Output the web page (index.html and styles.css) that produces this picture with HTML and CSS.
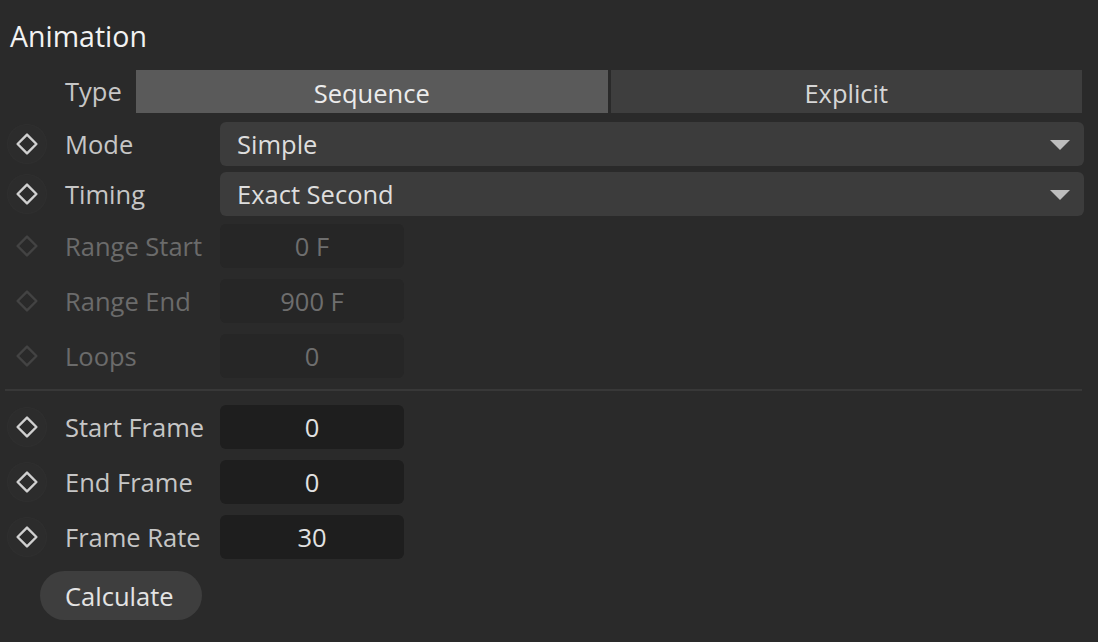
FILE: index.html
```html
<!DOCTYPE html>
<html>
<head>
<meta charset="utf-8">
<link rel="stylesheet" href="styles.css">
</head>
<body>
<div class="panel">
  <div class="title">Animation</div>

  <div class="row row-type">
    <div class="icon-slot"></div>
    <div class="label label-type">Type</div>
    <div class="segmented">
      <div class="seg seg-active">Sequence</div>
      <div class="seg">Explicit</div>
    </div>
  </div>

  <div class="row row-mode">
    <div class="icon-slot"><span class="key"><svg viewBox="0 0 24 24" width="24" height="24"><path d="M12 2.6 L21.4 12 L12 21.4 L2.6 12 Z"/></svg></span></div>
    <div class="label">Mode</div>
    <div class="dropdown"><span>Simple</span><span class="arrow"></span></div>
  </div>

  <div class="row row-timing">
    <div class="icon-slot"><span class="key"><svg viewBox="0 0 24 24" width="24" height="24"><path d="M12 2.6 L21.4 12 L12 21.4 L2.6 12 Z"/></svg></span></div>
    <div class="label">Timing</div>
    <div class="dropdown"><span>Exact Second</span><span class="arrow"></span></div>
  </div>

  <div class="row row-rs disabled">
    <div class="icon-slot"><span class="key off"><svg viewBox="0 0 24 24" width="24" height="24"><path d="M12 2.6 L21.4 12 L12 21.4 L2.6 12 Z"/></svg></span></div>
    <div class="label">Range Start</div>
    <div class="field">0 F</div>
  </div>

  <div class="row row-gap11 disabled">
    <div class="icon-slot"><span class="key off"><svg viewBox="0 0 24 24" width="24" height="24"><path d="M12 2.6 L21.4 12 L12 21.4 L2.6 12 Z"/></svg></span></div>
    <div class="label">Range End</div>
    <div class="field">900 F</div>
  </div>

  <div class="row row-gap11 disabled">
    <div class="icon-slot"><span class="key off"><svg viewBox="0 0 24 24" width="24" height="24"><path d="M12 2.6 L21.4 12 L12 21.4 L2.6 12 Z"/></svg></span></div>
    <div class="label">Loops</div>
    <div class="field">0</div>
  </div>

  <div class="separator"></div>

  <div class="row row-sf">
    <div class="icon-slot"><span class="key"><svg viewBox="0 0 24 24" width="24" height="24"><path d="M12 2.6 L21.4 12 L12 21.4 L2.6 12 Z"/></svg></span></div>
    <div class="label">Start Frame</div>
    <div class="field">0</div>
  </div>

  <div class="row row-gap11">
    <div class="icon-slot"><span class="key"><svg viewBox="0 0 24 24" width="24" height="24"><path d="M12 2.6 L21.4 12 L12 21.4 L2.6 12 Z"/></svg></span></div>
    <div class="label">End Frame</div>
    <div class="field">0</div>
  </div>

  <div class="row row-gap11">
    <div class="icon-slot"><span class="key"><svg viewBox="0 0 24 24" width="24" height="24"><path d="M12 2.6 L21.4 12 L12 21.4 L2.6 12 Z"/></svg></span></div>
    <div class="label">Frame Rate</div>
    <div class="field">30</div>
  </div>

  <div class="btn-row">
    <button class="btn">Calculate</button>
  </div>
</div>
</body>
</html>
```

FILE: styles.css
```css
html, body {
  margin: 0;
  padding: 0;
  background: #2a2a2a;
  height: 100%;
}

body {
  font-family: "Open Sans", "Noto Sans", "Liberation Sans", sans-serif;
  color: #c6c6c6;
  overflow: hidden;
}

.panel {
  width: 1098px;
  height: 642px;
  display: flex;
  flex-direction: column;
}

.title {
  height: 70px;
  box-sizing: border-box;
  padding-left: 10px;
  padding-top: 16px;
  font-size: 28.5px;
  line-height: 40px;
  color: #f2f2f2;
}

.row {
  display: flex;
  align-items: center;
  height: 44px;
  flex-shrink: 0;
}

.row-type { height: 43px; }
.row-mode { margin-top: 9px; }
.row-timing { margin-top: 6px; }
.row-rs { margin-top: 8px; }
.row-gap11 { margin-top: 11px; }
.row-sf { margin-top: 14px; }

.icon-slot {
  width: 65px;
  height: 44px;
  flex-shrink: 0;
  display: flex;
  align-items: center;
}

.key {
  margin-left: 8px;
  width: 38px;
  height: 38px;
  border-radius: 50%;
  background: #2c2c2c;
  box-shadow: 0 0 0 1px #2f2f2f;
  display: flex;
  align-items: center;
  justify-content: center;
}

.key svg path {
  fill: none;
  stroke: #d0d0d0;
  stroke-width: 2.4;
  stroke-linejoin: round;
}

.key.off {
  background: transparent;
  box-shadow: none;
}

.key.off svg path {
  stroke: #434343;
}

.label {
  width: 155px;
  flex-shrink: 0;
  font-size: 25.5px;
  line-height: 44px;
  color: #c6c6c6;
  white-space: nowrap;
}

.label-type {
  width: 71px;
  line-height: 47px;
}

.disabled .label {
  color: #6b6b6b;
}

.segmented {
  display: flex;
  gap: 3px;
  width: 946px;
  height: 43px;
}

.seg {
  flex: 1;
  background: #3e3e3e;
  color: #d6d6d6;
  font-size: 25.5px;
  line-height: 47px;
  height: 43px;
  overflow: hidden;
  text-align: center;
}

.seg-active {
  background: #5a5a5a;
  color: #ececec;
}

.dropdown {
  width: 864px;
  height: 44px;
  box-sizing: border-box;
  background: #3c3c3c;
  border-radius: 6px;
  padding: 0 14px 0 17px;
  display: flex;
  align-items: center;
  justify-content: space-between;
  font-size: 25.5px;
  color: #dedede;
}

.arrow {
  width: 0;
  height: 0;
  border-left: 10px solid transparent;
  border-right: 10px solid transparent;
  border-top: 10px solid #bdbdbd;
  margin-top: 2px;
}

.field {
  width: 184px;
  height: 44px;
  box-sizing: border-box;
  background: #1e1e1e;
  border-radius: 6px;
  text-align: center;
  font-size: 25.5px;
  line-height: 44px;
  color: #e2e2e2;
}

.disabled .field {
  background: #262626;
  color: #6e6e6e;
}

.separator {
  margin-top: 11px;
  margin-left: 5px;
  width: 1077px;
  height: 2px;
  background: #383838;
  flex-shrink: 0;
}

.btn-row {
  margin-top: 12px;
  padding-left: 40px;
}

.btn {
  width: 162px;
  height: 49px;
  border: none;
  border-radius: 25px;
  background: #3e3e3e;
  color: #e4e4e4;
  font-family: inherit;
  font-size: 25.5px;
  text-align: left;
  padding: 0 0 0 25px;
  cursor: default;
}
```
